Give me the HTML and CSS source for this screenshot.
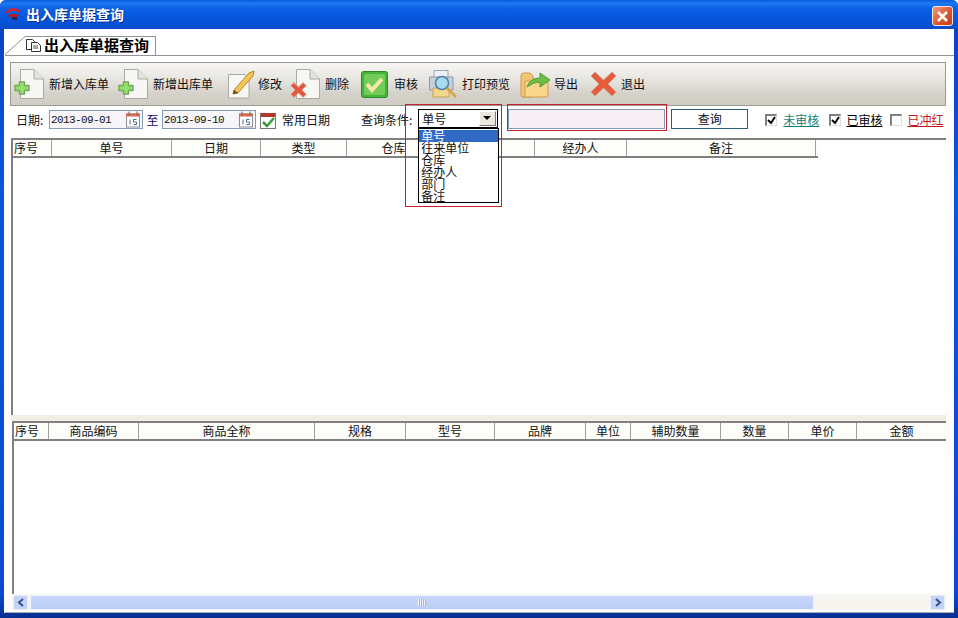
FILE: index.html
```html
<!DOCTYPE html>
<html>
<head>
    <meta charset="UTF-8">
    <title>出入库单据查询</title>
    <link rel="stylesheet" href="styles.css">
</head>
<body>
    <svg class="defs" width="0" height="0">
        <symbol id="page" viewBox="0 0 24 30">
            <path d="M.5 .5H14L23.5 10V29.5H.5Z" fill="#f7f7f4" stroke="#a9a9a4"/>
            <path d="M14 .5V10H23.5" fill="#e4e4de" stroke="#a9a9a4"/>
        </symbol>
        <symbol id="plus" viewBox="0 0 16 14">
            <path d="M5.500 1H10.500V4.500H15V9.500H10.500V13H5.500V9.500H1V4.500H5.500Z" fill="#93e06a" stroke="#74a860" stroke-width="1.400" stroke-linejoin="round"/>
        </symbol>
        <symbol id="cal" viewBox="0 0 16 16">
            <rect x="1.500" y="2.500" width="13" height="13" fill="#fff" stroke="#8b8f94"/>
            <rect x="1" y="2" width="14" height="3" fill="#d9694f"/>
            <path d="M4 0V4M12 0V4" stroke="#666"/>
            <path d="M5 8V13M11.500 8H8.500V10.500H11.500V13H8.500" fill="none" stroke="#4a6d8c"/>
        </symbol>
    </svg>

    <div class="window">
        <div class="titlebar">
            <svg class="app-icon" width="15" height="13" viewBox="0 0 15 13">
                <path d="M1 5C2 1 11 0 13 4" fill="none" stroke="#e02020" stroke-width="2.500"/>
                <path d="M2 7C5 11 10 11 13 7L9 6H5Z" fill="#c01818"/>
                <path d="M6 9H11V12H6Z" fill="#18286a"/>
            </svg>
            <span class="title-text">出入库单据查询</span>
            <div class="close-btn">
                <svg width="13" height="13" viewBox="0 0 13 13"><path d="M2 2L11 11M11 2L2 11" stroke="#fff" stroke-width="2.600"/></svg>
            </div>
        </div>

        <div class="client">
            <div class="tabstrip">
                <svg class="tab-slope" width="20" height="19" viewBox="0 0 20 19"><path d="M0 18.500L20 .5" stroke="#8f9596" fill="none"/></svg>
                <div class="tab">
                    <svg width="15" height="13" viewBox="0 0 15 13">
                        <path d="M.5 .5H6.500L8.500 2.500V10.500H.5Z" fill="#fff" stroke="#333"/>
                        <path d="M5.500 3.500H11.500L14.500 6.500V12.500H5.500Z" fill="#fff" stroke="#333"/>
                        <path d="M7 7H12M7 9H12" stroke="#555"/>
                    </svg>
                    <span>出入库单据查询</span>
                </div>
            </div>

            <div class="panel">
                <div class="toolbar">
                    <div class="tool">
                        <span class="ico">
                            <svg class="doc" width="24" height="30"><use href="#page"/></svg>
                            <svg class="badge" width="16" height="14"><use href="#plus"/></svg>
                        </span>
                        <span>新增入库单</span>
                    </div>
                    <div class="tool gap-9">
                        <span class="ico">
                            <svg class="doc" width="24" height="30"><use href="#page"/></svg>
                            <svg class="badge" width="16" height="14"><use href="#plus"/></svg>
                        </span>
                        <span>新增出库单</span>
                    </div>
                    <div class="tool gap-15 tight3">
                        <svg width="27" height="29" viewBox="0 0 27 29">
                            <path d="M.5 4.500H17L21 8.500V28H.5Z" fill="#f7f7f4" stroke="#a9a9a4"/>
                            <path d="M6 20L21 3L26 1L25 6L10 23L5 24Z" fill="#f3c556" stroke="#b9852e"/>
                            <path d="M5 24L6 20L10 23Z" fill="#5a4a30"/>
                        </svg>
                        <span>修改</span>
                    </div>
                    <div class="tool gap-8">
                        <span class="ico">
                            <svg class="doc" width="24" height="30"><use href="#page"/></svg>
                            <svg class="badge-x" width="17" height="16" viewBox="0 0 27 26">
                                <path d="M1 6L6 1L13.500 8L21 1L26 6L19 13L26 20L21 25L13.500 18L6 25L1 20L8 13Z" fill="#e4573f" stroke="#d9a89e" stroke-width="1.500"/>
                            </svg>
                        </span>
                        <span>删除</span>
                    </div>
                    <div class="tool gap-12 tight2">
                        <svg width="27" height="27" viewBox="0 0 27 27">
                            <rect x=".5" y=".5" width="26" height="26" rx="2" fill="#46b33c" stroke="#2d8a2a"/>
                            <rect x="3" y="3" width="21" height="21" rx="2" fill="#72cc58"/>
                            <path d="M6 13L11 19L21 8" fill="none" stroke="#f6e7a8" stroke-width="4"/>
                        </svg>
                        <span>审核</span>
                    </div>
                    <div class="tool gap-11 tight">
                        <svg width="29" height="29" viewBox="0 0 29 29">
                            <path d="M5 .5H19V10H5Z" fill="#eef0f4" stroke="#9aa4b0"/>
                            <path d="M.5 7H24V20H.5Z" fill="#c6d0dc" stroke="#8d99a8"/>
                            <path d="M4 18H20V27H4Z" fill="#f3d58c" stroke="#c9a253"/>
                            <circle cx="13" cy="13" r="6.500" fill="#a9dcf2" stroke="#4f7fa0" stroke-width="1.500"/>
                            <path d="M18 18L27 27" stroke="#d6a441" stroke-width="2.500"/>
                        </svg>
                        <span>打印预览</span>
                    </div>
                    <div class="tool gap-10 tight3">
                        <svg width="31" height="28" viewBox="0 0 31 28">
                            <path d="M1 6Q1 3 4 3H10L13 6V27H3Q1 27 1 25Z" fill="#f2c576" stroke="#d09a4a"/>
                            <path d="M5 11H28V25Q28 27 26 27H3Q5 27 5 25Z" fill="#f8d68c" stroke="#d09a4a"/>
                            <path d="M7 17Q10 8 20 8V3L30 10L20 17V12Q13 12 7 17Z" fill="#6fbf45" stroke="#4f9a30"/>
                        </svg>
                        <span>导出</span>
                    </div>
                    <div class="tool gap-12 tight">
                        <svg width="27" height="26" viewBox="0 0 27 26">
                            <path d="M1 5L5 1L13.500 9L22 1L26 5L18 13L26 21L22 25L13.500 17L5 25L1 21L9 13Z" fill="#e85c3c" stroke="#c9a08e"/>
                        </svg>
                        <span>退出</span>
                    </div>
                </div>

                <div class="filters">
                    <span class="lbl-date">日期:</span>
                    <div class="date-box">
                        <span>2013-09-01</span>
                        <svg width="16" height="17"><use href="#cal"/></svg>
                    </div>
                    <span class="to">至</span>
                    <div class="date-box">
                        <span>2013-09-10</span>
                        <svg width="16" height="17"><use href="#cal"/></svg>
                    </div>
                    <svg class="cal-check" width="16" height="17" viewBox="0 0 16 17">
                        <rect x=".5" y="1.500" width="15" height="15" fill="#fff" stroke="#777"/>
                        <rect x="1" y="1" width="14" height="4" fill="#b3372c"/>
                        <path d="M3 10L7 14L14 6" fill="none" stroke="#3d9a3a" stroke-width="2.500"/>
                    </svg>
                    <span class="often">常用日期</span>
                    <span class="lbl-query">查询条件:</span>
                    <div class="select">
                        <span>单号</span>
                        <span class="arrow-btn"></span>
                        <div class="red-box red-select"></div>
                        <ul class="drop">
                            <li class="on">单号</li>
                            <li>往来单位</li>
                            <li>仓库</li>
                            <li>经办人</li>
                            <li>部门</li>
                            <li>备注</li>
                        </ul>
                    </div>
                    <div class="search">
                        <div class="red-box red-search"></div>
                    </div>
                    <div class="query-btn">查询</div>
                    <span class="chk"><svg width="9" height="9" viewBox="0 0 9 9"><path d="M1 4L4 7L8 1" fill="none" stroke="#000" stroke-width="2"/></svg></span>
                    <span class="link teal">未审核</span>
                    <span class="chk chk-2"><svg width="9" height="9" viewBox="0 0 9 9"><path d="M1 4L4 7L8 1" fill="none" stroke="#000" stroke-width="2"/></svg></span>
                    <span class="link link-tight">已审核</span>
                    <span class="chk chk-3"></span>
                    <span class="link link-tight red">已冲红</span>
                </div>

                <div class="grid grid-top">
                    <div class="head head-top">
                        <div>序号</div>
                        <div>单号</div>
                        <div>日期</div>
                        <div>类型</div>
                        <div>仓库</div>
                        <div></div>
                        <div>经办人</div>
                        <div>备注</div>
                    </div>
                </div>

                <div class="splitter"></div>

                <div class="grid grid-bottom">
                    <div class="head head-bottom">
                        <div>序号</div>
                        <div>商品编码</div>
                        <div>商品全称</div>
                        <div>规格</div>
                        <div>型号</div>
                        <div>品牌</div>
                        <div>单位</div>
                        <div>辅助数量</div>
                        <div>数量</div>
                        <div>单价</div>
                        <div>金额</div>
                    </div>
                </div>

                <div class="scrollbar">
                    <div class="sb-btn">
                        <svg width="8" height="9" viewBox="0 0 8 9"><path d="M6 1L2 4.500L6 8" fill="none" stroke="#3a4f8a" stroke-width="2"/></svg>
                    </div>
                    <div class="sb-thumb"><span class="grip"></span></div>
                    <div class="sb-btn">
                        <svg width="8" height="9" viewBox="0 0 8 9"><path d="M2 1L6 4.500L2 8" fill="none" stroke="#3a4f8a" stroke-width="2"/></svg>
                    </div>
                </div>
            </div>
        </div>
    </div>
</body>
</html>
```

FILE: styles.css
```css
* {
    margin: 0;
    padding: 0;
    box-sizing: border-box;
}

body {
    width: 958px;
    height: 618px;
    overflow: hidden;
    font-family: "Noto Sans CJK SC", "Liberation Sans", sans-serif;
    font-size: 12px;
    line-height: 14px;
    color: #111;
    background: #fff;
}

.defs {
    position: absolute;
}

.window {
    width: 958px;
    height: 618px;
    display: flex;
    flex-direction: column;
    background: linear-gradient(#0a3fc0, #0a56d8 30%, #0a4ad0 96%, #082f90);
    border-radius: 6px 6px 0 0;
    overflow: hidden;
}

/* barra de titulo */
.titlebar {
    height: 29px;
    flex: none;
    display: flex;
    align-items: center;
    padding: 0 5px 0 6px;
    background: linear-gradient(#0a5ce0, #1c78f0 12%, #0a60e6 30%, #0652d8 75%, #0a4cc8);
    color: #fff;
}

.app-icon {
    margin-right: 5px;
}

.title-text {
    margin-bottom: 2px;
    font-size: 14px;
    line-height: 18px;
    font-weight: bold;
    text-shadow: 1px 1px 0 #0a2f90;
}

.close-btn {
    margin-left: auto;
    margin-top: 3px;
    width: 21px;
    height: 20px;
    display: flex;
    align-items: center;
    justify-content: center;
    background: linear-gradient(135deg, #ef9a7c, #d9532c 60%, #c23c1c);
    border: 1px solid #f2e6e0;
    border-radius: 3px;
}

.client {
    flex: 1;
    margin: 0 4px 5px 4px;
    background: #fff;
    display: flex;
    flex-direction: column;
    padding-top: 7px;
}

/* pestana */
.tabstrip {
    height: 19px;
    flex: none;
    display: flex;
    margin-left: 1px;
}

.tab {
    width: 131px;
    height: 19px;
    display: flex;
    align-items: center;
    padding-bottom: 2px;
    border-top: 1px solid #8f9596;
    border-right: 1px solid #8f9596;
    background: #fff;
    font-weight: bold;
    color: #000;
}

.tab span {
    margin-left: 3px;
    font-size: 15px;
    line-height: 16px;
}

.tab svg {
    margin-left: 1px;
}

.panel {
    flex: 1;
    display: flex;
    flex-direction: column;
    margin-left: 1px;
    border-top: 1px solid #8f9596;
    border-bottom: 1px solid #a7aeae;
    padding: 6px 8px 2px 6px;
}

/* barra de herramientas */
.toolbar {
    height: 44px;
    flex: none;
    width: 936px;
    margin-left: -1px;
    display: flex;
    align-items: center;
    padding-left: 3px;
    border: 1px solid #9a9a94;
    background: linear-gradient(#f7f6f3, #e9e7e2 35%, #d4d1c9 75%, #d0cdc5);
}

.tool {
    display: flex;
    align-items: center;
    gap: 5px;
}

.tool.tight {
    gap: 4px;
}

.tool.tight2 {
    gap: 6px;
}

.tool.tight3 {
    gap: 3px;
}

.gap-8 { margin-left: 8px; }
.gap-9 { margin-left: 9px; }
.gap-10 { margin-left: 10px; }
.gap-11 { margin-left: 11px; }
.gap-12 { margin-left: 12px; }
.gap-15 { margin-left: 15px; }

.ico {
    position: relative;
    width: 30px;
    height: 30px;
    display: block;
}

.ico .doc {
    position: absolute;
    top: 0;
    right: 0;
}

.ico .badge {
    position: absolute;
    left: 0;
    bottom: 4px;
}

.ico .badge-x {
    position: absolute;
    left: 0;
    bottom: 1px;
}

/* filtros */
.filters {
    height: 28px;
    flex: none;
    display: flex;
    align-items: center;
    padding-left: 5px;
    margin-right: -8px;
}

.lbl-date {
    width: 33px;
}

.date-box {
    width: 94px;
    height: 19px;
    margin-bottom: 1px;
    display: flex;
    align-items: center;
    justify-content: space-between;
    padding: 0 1px;
    border: 1px solid #7f9db9;
    background: #f7f5f8;
    font-family: "Liberation Mono", monospace;
    font-size: 11px;
    letter-spacing: -0.600px;
    color: #111;
}

.to {
    width: 19px;
    text-align: center;
    color: #0a0a80;
}

.cal-check {
    margin-left: 4px;
}

.often {
    margin-left: 6px;
}

.lbl-query {
    margin-left: 31px;
}

.select {
    position: relative;
    width: 80px;
    height: 19px;
    margin-left: 6px;
    margin-bottom: 3px;
    display: flex;
    align-items: center;
    padding-left: 3px;
    border: 1px solid #000;
    background: #fff;
}

.arrow-btn {
    position: absolute;
    right: 1px;
    top: 1px;
    width: 17px;
    height: 15px;
    background: #e9e7de;
    border: 1px solid;
    border-color: #fff #777 #777 #fff;
}

.arrow-btn::after {
    content: "";
    position: absolute;
    left: 3px;
    top: 4px;
    border: 4px solid transparent;
    border-top: 4px solid #000;
    border-bottom: 0;
}

.drop {
    position: absolute;
    left: -1px;
    top: 18px;
    width: 81px;
    height: 75px;
    padding-top: 1px;
    list-style: none;
    border: 1px solid #000;
    background: #fff;
    z-index: 2;
    line-height: 12px;
    color: #111;
}

.drop li {
    height: 12px;
    padding-left: 2px;
}

.drop .on {
    background: #316ac5;
    color: #fff;
}

.red-box {
    position: absolute;
    border: 1px solid #c8202c;
    z-index: 3;
    pointer-events: none;
}

.red-select {
    left: -14px;
    top: -6px;
    width: 97px;
    height: 103px;
}

.search {
    position: relative;
    width: 157px;
    height: 20px;
    margin-left: 10px;
    margin-bottom: 2px;
    border: 1px solid #7f9db9;
    background: #f7f1f7;
}

.red-search {
    left: -2px;
    top: -6px;
    width: 160px;
    height: 27px;
}

.query-btn {
    width: 77px;
    height: 20px;
    margin-left: 6px;
    margin-bottom: 2px;
    border: 1px solid #2f5f7f;
    background: #fff;
    text-align: center;
    line-height: 18px;
}

.chk {
    width: 12px;
    height: 12px;
    margin-left: 17px;
    display: flex;
    align-items: center;
    justify-content: center;
    border-style: solid;
    border-width: 2px 1px 1px 2px;
    border-color: #808080 #ddd #ddd #808080;
    background: #fff;
}

.chk-2 {
    margin-left: 10px;
}

.chk-3 {
    margin-left: 8px;
}

.link {
    margin-left: 6px;
    text-decoration: underline;
    white-space: nowrap;
    color: #000;
}

.link-tight {
    margin-left: 5px;
}

.link.teal {
    color: #0f7f7a;
}

.link.red {
    color: #c01820;
}

/* rejillas */
.grid {
    border-top: 2px solid #808080;
    border-left: 2px solid #808080;
    background: #fff;
}

.grid-top {
    margin-top: 4px;
    height: 277px;
    flex: none;
}

.grid-bottom {
    flex: 1;
    margin-left: 1px;
}

.head {
    display: grid;
    height: 18px;
    line-height: 16px;
    text-align: center;
    background: #fdfdf9;
    border-bottom: 2px solid #808080;
}

.head div {
    border-right: 1px solid #a0a0a0;
    color: #111;
}

.head div:first-child {
    text-align: left;
    padding-left: 1px;
}

.head-top {
    width: 805px;
    grid-template-columns: 39px 120px 89px 86px 94px 94px 92px 189px;
}

.head-bottom {
    grid-template-columns: 35px 90px 176px 91px 89px 91px 45px 90px 68px 68px 1fr;
}

.head-bottom div:last-child {
    border-right: 0;
}

.splitter {
    height: 6px;
    flex: none;
    background: #f1efe4;
}

.scrollbar {
    height: 16px;
    flex: none;
    display: flex;
    align-items: center;
    margin-left: 1px;
    padding: 0 1px;
    background: #f6f5ef;
}

.sb-btn {
    width: 15px;
    height: 15px;
    display: flex;
    align-items: center;
    justify-content: center;
    background: #c3d3f5;
    border: 1px solid #e8eefb;
    border-radius: 2px;
}

.sb-thumb {
    width: 784px;
    height: 15px;
    margin: 0 auto 0 2px;
    display: flex;
    align-items: center;
    justify-content: center;
    background: linear-gradient(#c8d7fb, #bccdf8);
    border: 1px solid #eef2fd;
    border-radius: 2px;
}

.grip {
    width: 8px;
    height: 7px;
    background: repeating-linear-gradient(90deg, #eef2fd 0 1px, #9fb5e8 1px 2px);
}
```
